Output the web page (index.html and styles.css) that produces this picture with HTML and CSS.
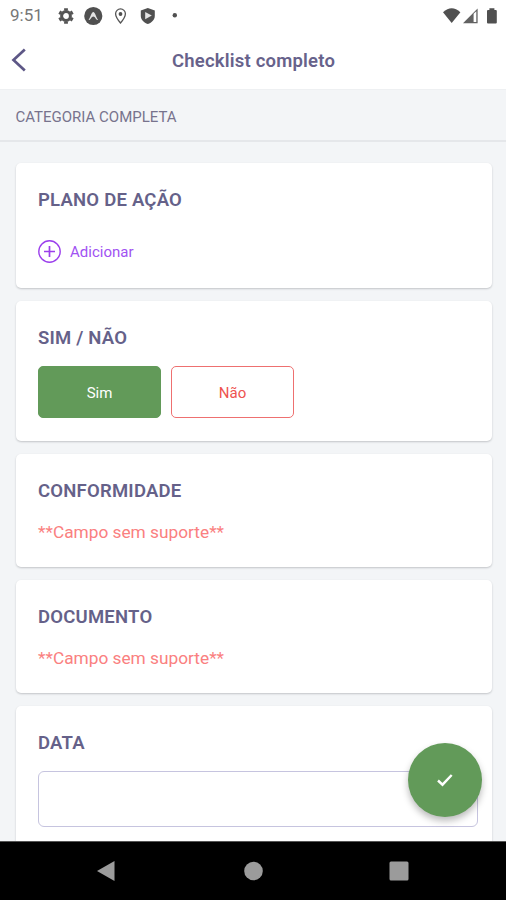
FILE: index.html
```html
<!DOCTYPE html>
<html lang="pt-BR">
<head>
<meta charset="utf-8">
<title>Checklist completo</title>
<link rel="stylesheet" href="styles.css">
</head>
<body>
<div class="phone">
  <div class="status">
    <span class="clock">9:51</span>
    <svg class="status-left" width="140" height="20" viewBox="0 0 140 20">
      <g fill="none" stroke="#555">
        <circle cx="10" cy="10" r="4.4" stroke-width="3"/>
        <path stroke-width="3.8" d="M10 2.300v2.300M10 15.400v2.300M3.300 6.200l2 1.100M14.700 12.700l2 1.100M3.300 13.800l2-1.100M14.700 7.300l2-1.100"/>
      </g>
      <circle cx="37.300" cy="10" r="9.100" fill="#505050"/>
      <path d="M32.600 13.700c2-2.300 2.800-7.800 4.700-7.800s2.700 5.500 4.700 7.800c-2 1.200-2.500-3.200-4.700-3.200s-2.700 4.400-4.700 3.200z" fill="#e4e4e4"/>
      <path d="M64.500 2.900a4.900 4.900 0 0 0-4.900 4.900c0 3.500 4.900 9.200 4.900 9.200s4.900-5.700 4.900-9.200a4.900 4.900 0 0 0-4.900-4.900z" fill="none" stroke="#555" stroke-width="1.300"/>
      <circle cx="64.500" cy="8" r="1.900" fill="#505050"/>
      <path d="M91.800 1.900l7 2.600v5.300c0 3.900-2.900 6.900-7 8.200-4.100-1.300-7-4.300-7-8.200V4.500z" fill="#505050"/>
      <path d="M89.200 6l6.600 3.500-6.600 3.800z" fill="#e4e4e4"/>
      <circle cx="118.800" cy="9.300" r="2.200" fill="#505050"/>
    </svg>
    <svg class="status-right" width="56" height="20" viewBox="0 0 56 20">
      <path d="M1 6.200Q9.700-1.600 18.400 6.200L9.700 17z" fill="#505050"/>
      <path d="M21 17.300L35.600 2.500v14.800z" fill="#626262"/>
      <path d="M31.600 7.800l2.700-2.500v10.800h-2.700z" fill="#fff"/>
      <path d="M47.400 2.200h5v1.700h1.400q1 0 1 1v11.500q0 1-1 1H46q-1 0-1-1V4.900q0-1 1-1h1.400z" fill="#505050"/>
    </svg>
  </div>
  <header class="header">
    <svg class="back" width="16" height="24" viewBox="0 0 16 24"><path d="M13.800 1.500L2.500 12l11.300 10.500" fill="none" stroke="#5d5786" stroke-width="2.700"/></svg>
    <h1 class="title">Checklist completo</h1>
  </header>
  <div class="category"><span class="category-text">CATEGORIA COMPLETA</span></div>
  <main class="list">
    <section class="card plan">
      <h2>PLANO DE AÇÃO</h2>
      <div class="add">
        <svg width="24" height="24" viewBox="0 0 24 24" fill="none" stroke="#9b3fec"><circle cx="11.500" cy="11.500" r="10.700" stroke-width="1.400"/><path d="M11.500 6v11M6 11.500h11" stroke-width="1.700"/></svg>
        <span>Adicionar</span>
      </div>
    </section>
    <section class="card choice">
      <h2>SIM / NÃO</h2>
      <div class="buttons"><div class="btn yes">Sim</div><div class="btn no">Não</div></div>
    </section>
    <section class="card unsupported"><h2>CONFORMIDADE</h2><p>**Campo sem suporte**</p></section>
    <section class="card unsupported"><h2>DOCUMENTO</h2><p>**Campo sem suporte**</p></section>
    <section class="card date"><h2>DATA</h2><div class="field"></div></section>
  </main>
  <div class="fab"><svg width="18" height="14" viewBox="0 0 18 14"><path d="M2 7.500l4.500 4.200L15.700 2" fill="none" stroke="#fff" stroke-width="2.400"/></svg></div>
  <nav class="nav">
    <svg width="20" height="22" viewBox="0 0 20 22"><path d="M1 11L18.500 1v20z" fill="#9b9b9b"/></svg>
    <svg width="20" height="22" viewBox="0 0 20 22"><circle cx="10.500" cy="11" r="9.300" fill="#9b9b9b"/></svg>
    <svg width="20" height="22" viewBox="0 0 20 22"><rect x=".5" y="1.500" width="19" height="19" rx="1.500" fill="#9b9b9b"/></svg>
  </nav>
</div>
</body>
</html>
```
FILE: styles.css
```css
* { box-sizing: border-box; }
body { margin: 0; font-family: Roboto, sans-serif; }
h1, h2, p { margin: 0; }
svg { display: block; flex: none; }
.phone { position: relative; width: 506px; height: 900px; display: flex; flex-direction: column; overflow: hidden; background: #f3f5f7; }
.status { height: 31px; flex: none; display: flex; align-items: center; padding: 0 8px 0 10px; background: #fff; }
.clock { width: 46px; font-size: 17px; line-height: 31px; color: #777; white-space: nowrap; }
.status-right { margin-left: auto; }
.header { height: 59px; flex: none; display: grid; grid-template-columns: 40px 1fr 40px; align-items: center; background: #fff; border-bottom: 1px solid #eef0f2; }
.back { margin-left: 11px; }
.title { padding: 2px 0 0 1px; text-align: center; font-size: 18.500px; line-height: 24px; font-weight: 600; letter-spacing: .2px; color: #67628b; white-space: nowrap; }
.category { height: 52px; flex: none; display: flex; align-items: center; padding: 3px 15.500px 0; border-bottom: 2px solid #e5e7ea; }
.category-text { font-size: 15px; line-height: 20px; color: #77738d; white-space: nowrap; }
.list { flex: 1; min-height: 0; overflow: hidden; display: flex; flex-direction: column; gap: 13px; padding: 21px 14px 0 16px; }
.card { flex: none; padding: 25px 22px 0; background: #fff; border-radius: 5px; box-shadow: 0 1px 2px rgba(40, 45, 55, .24); }
.card h2 { font-size: 18.500px; line-height: 24px; font-weight: 600; letter-spacing: .22px; color: #656189; white-space: nowrap; }
.plan { height: 125px; }
.choice { height: 140px; }
.unsupported { height: 113px; }
.date { height: 160px; }
.add { display: flex; align-items: center; gap: 8px; margin-top: 28px; height: 24px; font-size: 15px; color: #a152f2; }
.buttons { display: flex; gap: 10px; margin-top: 16px; }
.btn { display: flex; align-items: center; justify-content: center; width: 123px; height: 52px; padding-top: 2px; border: 1px solid #629a59; border-radius: 5px; font-size: 15px; }
.yes { background: #629a59; color: #fff; }
.no { border-color: #ee7070; background: #fff; color: #ee5350; }
.unsupported p { margin-top: 17px; font-size: 17.300px; line-height: 24px; color: #fa8080; white-space: nowrap; }
.field { width: 440px; height: 56px; margin-top: 16px; border: 1px solid #c6c4df; border-radius: 6px; }
.fab { position: absolute; left: 408px; top: 743px; width: 74px; height: 74px; border-radius: 50%; display: flex; align-items: center; justify-content: center; background: #629a59; box-shadow: 0 4px 7px rgba(0, 0, 0, .27); }
.nav { height: 59px; flex: none; display: flex; align-items: center; justify-content: space-between; padding: 0 97px 0 96px; background: #000; border-top: 1px solid #555; }
```
